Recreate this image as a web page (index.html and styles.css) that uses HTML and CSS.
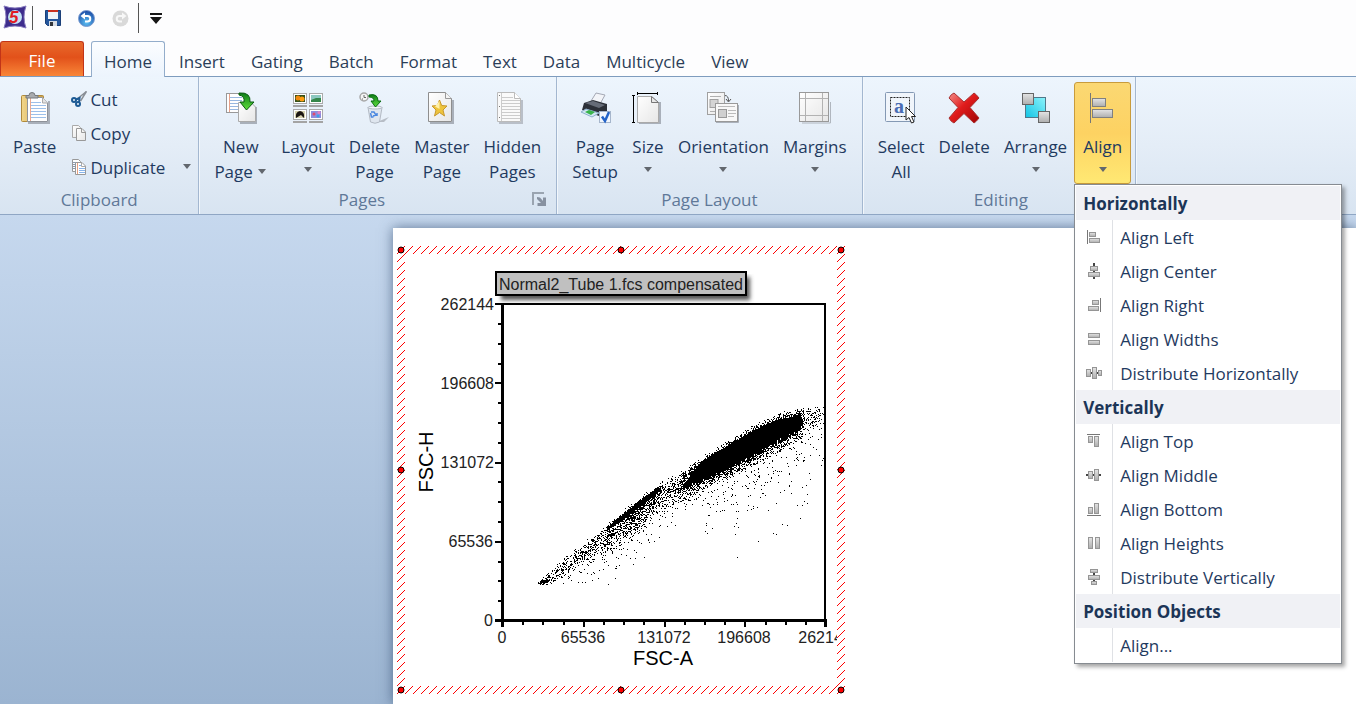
FILE: index.html
```html
<!DOCTYPE html>
<html lang="en">
<head>
<meta charset="utf-8">
<title>Layout editor</title>
<link rel="stylesheet" href="styles.css">
</head>
<body>
<svg class="defs" aria-hidden="true">
  <defs>
    <linearGradient id="paper" x1="0" y1="0" x2="1" y2="1"><stop offset="0" stop-color="#fff"/><stop offset="1" stop-color="#e6e6e6"/></linearGradient>
    <linearGradient id="grey" x1="0" y1="0" x2="0" y2="1"><stop offset="0" stop-color="#e4e4e4"/><stop offset="1" stop-color="#aeaeae"/></linearGradient>
    <linearGradient id="green" x1="0" y1="0" x2="0" y2="1"><stop offset="0" stop-color="#0e7c18"/><stop offset="1" stop-color="#5fe03c"/></linearGradient>
    <linearGradient id="red" x1="0" y1="0" x2="1" y2="1"><stop offset="0" stop-color="#f48c88"/><stop offset=".45" stop-color="#e01c1c"/><stop offset="1" stop-color="#a00404"/></linearGradient>
    <linearGradient id="cyan" x1="1" y1="0" x2="0" y2="1"><stop offset="0" stop-color="#8df3fb"/><stop offset="1" stop-color="#12c4e4"/></linearGradient>
    <linearGradient id="gold" x1="0" y1="0" x2="1" y2="0"><stop offset="0" stop-color="#f2d68a"/><stop offset="1" stop-color="#cda24a"/></linearGradient>
    <radialGradient id="blue" cx=".5" cy=".75" r=".7"><stop offset="0" stop-color="#5cc0f4"/><stop offset="1" stop-color="#1c4ea8"/></radialGradient>
    <symbol id="tri" viewBox="0 0 10 6"><path d="M1 0H9L5 5Z" fill="#62676e"/></symbol>
  </defs>
</svg>

<header class="quick">
  <svg class="logo" width="24" height="24" viewBox="0 0 24 24" role="img" aria-label="Application">
    <path d="M1 1Q12 5 23 1Q19 12 23 23Q12 19 1 23Q5 12 1 1Z" fill="#3d2c8c" stroke="#8478bc"/>
    <circle cx="12" cy="12" r="7" fill="#c4e4f4"/>
    <text x="6" y="18" class="logo-text">5</text>
  </svg>
  <span class="bar"></span>
  <button class="qbtn" aria-label="Save">
    <svg width="16" height="16" viewBox="0 0 16 16"><path d="M.5.5h15v15h-13l-2-2z" fill="#24569c" stroke="#1b3f78"/><path d="M3 1h10v8H3z" fill="#eef3f8"/><path d="M3 0h10v2H3z" fill="#c83020"/><path d="M4 11h8v5H4z" fill="#d6dce4"/><path d="M5 12h3v4H5z" fill="#30343a"/></svg>
  </button>
  <button class="qbtn" aria-label="Undo">
    <svg width="17" height="17" viewBox="0 0 17 17"><circle cx="8.500" cy="8.500" r="8" fill="url(#blue)" stroke="#7c9cd0"/><path d="M5.500 6H9.500a2.700 2.700 0 0 1 0 5.500H7" fill="none" stroke="#fff" stroke-width="2"/><path d="M2.500 6 7 2.500v7z" fill="#fff"/></svg>
  </button>
  <button class="qbtn" aria-label="Redo" disabled>
    <svg width="17" height="17" viewBox="0 0 17 17"><circle cx="8.500" cy="8.500" r="8" fill="#d9d9d9"/><path d="M11.500 6H7.500a2.700 2.700 0 0 0 0 5.500H10" fill="none" stroke="#f8f8f8" stroke-width="2"/><path d="M14.500 6 10 2.500v7z" fill="#f8f8f8"/></svg>
  </button>
  <span class="bar tall"></span>
  <button class="qbtn more" aria-label="Customize toolbar">
    <svg width="12" height="11" viewBox="0 0 12 11"><path d="M0 0h12v2H0zM0 4h12L6 11z" fill="#161616"/></svg>
  </button>
</header>

<nav class="tabs">
  <a class="tab file" href="#file">File</a>
  <a class="tab active" href="#home">Home</a>
  <a class="tab" href="#insert">Insert</a>
  <a class="tab" href="#gating">Gating</a>
  <a class="tab" href="#batch">Batch</a>
  <a class="tab" href="#format">Format</a>
  <a class="tab" href="#text">Text</a>
  <a class="tab" href="#data">Data</a>
  <a class="tab" href="#multicycle">Multicycle</a>
  <a class="tab" href="#view">View</a>
</nav>

<section class="ribbon">
  <div class="group clipboard">
    <div class="tools">
      <button class="tool">
        <svg width="32" height="32" viewBox="0 0 32 32"><path d="M30 9v22H9" stroke="#a9b0ba" stroke-width="2" fill="none"/><rect x="2.500" y="3.500" width="22" height="26" rx="1" fill="url(#gold)" stroke="#b08a3c"/><path d="M8.500 5.500H23.500L28.500 11V29.500H8.500Z" fill="#fff" stroke="#8e9299"/><path d="M23.500 5.500V11H28.500" fill="#e4e4e4" stroke="#aaa"/><path d="M12 10.500h10M12 13.500h15M12 16.500h15M12 19.500h15M12 22.500h15M12 25.500h15" stroke="#9cc0ea"/><path d="M11.500 6v23" stroke="#eaa892"/><path d="M7 6V3.500h3Q10 .5 13 .5T16 3.500h3V6Z" fill="#a9abae" stroke="#75787c"/></svg>
        <span>Paste</span>
      </button>
      <div class="small-tools">
        <button class="small">
          <svg width="16" height="16" viewBox="0 0 16 16"><path d="M5.500 8.500 15.500.5 9.500 10" fill="none" stroke="#8a8f96" stroke-width="1.500"/><path d="M5 8.500 8.500 7 8 12" fill="none" stroke="#1c5a94" stroke-width="2"/><circle cx="3" cy="9" r="2" fill="none" stroke="#1c5a94" stroke-width="2"/><circle cx="7" cy="13" r="2" fill="none" stroke="#1c5a94" stroke-width="2"/></svg>
          <span>Cut</span>
        </button>
        <button class="small">
          <svg width="16" height="16" viewBox="0 0 16 16"><path d="M1.500.5H7.500L9.500 2.500V12.500H1.500Z" fill="url(#paper)" stroke="#aaa"/><path d="M5.500 3.500H11L14.500 7V15.500H5.500Z" fill="url(#paper)" stroke="#999"/><path d="M10.500 3.500V7.500H14.500" fill="none" stroke="#999"/></svg>
          <span>Copy</span>
        </button>
        <button class="small">
          <svg width="16" height="16" viewBox="0 0 16 16"><path d="M1.500.5H7.500L9.500 2.500V12.500H1.500Z" fill="#fff" stroke="#999"/><path d="M2 3.500h3M2 5.500h3M2 7.500h3M2 9.500h3" stroke="#8a9cb4"/><path d="M4.500 3.500H11L14.500 7V15.500H4.500Z" fill="#fff" stroke="#999"/><path d="M10.500 3.500V7.500H14.500" fill="none" stroke="#aaa"/><path d="M8 6.500h2M8 9.500h6M8 11.500h6M8 13.500h6" stroke="#88b4ea"/><path d="M6.500 4v11" stroke="#e8a080"/></svg>
          <span>Duplicate</span>
          <svg class="arrow end" width="10" height="6"><use href="#tri"/></svg>
        </button>
      </div>
    </div>
    <div class="caption"><span>Clipboard</span></div>
  </div>

  <div class="group">
    <div class="tools">
      <button class="tool">
        <svg width="32" height="32" viewBox="0 0 32 32"><rect x="1.500" y="1.500" width="18" height="19" fill="#fff" stroke="#999"/><path d="M5 5.500h12M5 8.500h12M5 11.500h12M5 14.500h12M5 17.500h12" stroke="#98b8e0"/><path d="M4.500 2v18" stroke="#e8a088"/><path d="M31 15v16H15" stroke="#a9b0ba" stroke-width="2" fill="none"/><path d="M13.500 10.500H26L30.500 15V29.500H13.500Z" fill="url(#paper)" stroke="#aaa"/><path d="M14 1Q26 0 25 10H29L21.500 18 15 10H19Q20 4 14 3Z" fill="url(#green)" stroke="#0a5c12"/></svg>
        <span>New<br>Page <svg class="arrow" width="10" height="6"><use href="#tri"/></svg></span>
      </button>
      <button class="tool">
        <svg width="32" height="32" viewBox="0 0 32 32"><g fill="#fff" stroke="#aaa"><rect x="1.500" y="1.500" width="13" height="10"/><rect x="17.500" y="1.500" width="13" height="10"/><rect x="1.500" y="17.500" width="13" height="10"/><rect x="17.500" y="17.500" width="13" height="10"/></g><path d="M1 14h14M17 14h14M1 30h14M17 30h14" stroke="#a4a4a4" stroke-width="2"/><path d="M3 3h10v7H3z" fill="#35521a"/><circle cx="6" cy="6" r="2.500" fill="#f08a10"/><circle cx="10" cy="7" r="2.500" fill="#ff9d10"/><path d="M19 3h10v7H19z" fill="#8cc8c0"/><path d="M19 8 24 6h5v4H19z" fill="#35864a"/><path d="M3 19h10v7H3z" fill="#d8d4b0"/><path d="M4 26Q3 20 8 19Q13 20 12 26L9 23Z" fill="#1c1612"/><path d="M19 19h10v7H19z" fill="#8f8cdc"/><circle cx="22" cy="22" r="1.500" fill="#e04a6c"/><circle cx="26" cy="24" r="1.500" fill="#3ca0e8"/><circle cx="27" cy="20.500" r="1.500" fill="#e880c0"/></svg>
        <span>Layout</span>
        <svg class="arrow" width="10" height="6"><use href="#tri"/></svg>
      </button>
      <button class="tool">
        <svg width="32" height="32" viewBox="0 0 32 32"><path d="M19 30 31 25 26 30Z" fill="#b7bdc6"/><circle cx="6" cy="5" r="4" fill="#f5f5f5" stroke="#a7a7a7" stroke-width="1.500"/><path d="M6 3v2.500h2M4 7h1" stroke="#666" fill="none"/><path d="M10 15.500H24L21.500 30Q17 32.500 12.500 30Z" fill="#dfe6ef" stroke="#b3bac4"/><ellipse cx="17" cy="15.500" rx="7" ry="1.500" fill="#f5f8fb" stroke="#b3bac4"/><path d="M13 20h3l2 3-3 1M12.500 21l1 4h2M19 21v3" fill="none" stroke="#4c88e0" stroke-width="1.500"/><path d="M11 3Q20 1 20 9H23L17.500 15 13 9H16Q16 5 11 5Z" fill="url(#green)" stroke="#0a6c12"/></svg>
        <span>Delete<br>Page</span>
      </button>
      <button class="tool">
        <svg width="32" height="32" viewBox="0 0 32 32"><path d="M27 8v23H4" stroke="#a9b0ba" stroke-width="2" fill="none"/><path d="M2.500.5H19.500L25.500 6.500V29.500H2.500Z" fill="url(#paper)" stroke="#8e8e8e"/><path d="M19.500.5V6.500H25.500" fill="#f4f4f4" stroke="#999"/><path d="M13.500 8 15.700 13.500 21 14 17 18 18.500 24 13.500 20.500 8.500 24 10 18 6 14 11.300 13.500Z" fill="#eec43c" stroke="#c8982c"/><path d="M13.500 9V17L9 14.500Z" fill="#fff0a8"/></svg>
        <span>Master<br>Page</span>
      </button>
      <button class="tool">
        <svg width="32" height="32" viewBox="0 0 32 32"><path d="M26 8v23H3" stroke="#b9bfc8" stroke-width="2" fill="none"/><path d="M1.500.5H18.500L24.500 6.500V29.500H1.500Z" fill="#fafafa" stroke="#bbb"/><path d="M6 5.500h11M6 8.500h18M6 11.500h18M6 14.500h18M6 17.500h18M6 20.500h18M6 23.500h18M6 26.500h18M5.500 1v28" stroke="#ccc"/><path d="M18.500.5V6.500H24.500" fill="#fff" stroke="#bbb"/><path d="M3 3h1v1H3zM3 14h1v1H3zM3 25h1v1H3z" fill="#777"/></svg>
        <span>Hidden<br>Pages</span>
      </button>
    </div>
    <div class="caption"><span>Pages</span>
      <button class="launcher" aria-label="Pages options"><svg width="14" height="14" viewBox="0 0 14 14"><path d="M1 13V1H12" fill="none" stroke="#9aa4b0" stroke-width="2"/><path d="M5 5 8 5.500 11 9V5.500H14V14H5.500V11H9L5 7Z" fill="#8791a0"/></svg></button>
    </div>
  </div>

  <div class="group">
    <div class="tools">
      <button class="tool">
        <svg width="32" height="32" viewBox="0 0 32 32"><path d="M12 9 17 1 26 3 21 12Z" fill="#f2f4f8" stroke="#a4a8b4"/><path d="M5 11 14 8 28 12V19L20 24 3 18Z" fill="#2c3038"/><path d="M6 11 14 9 26 13 20 16Z" fill="#666c78"/><path d="M2 20 7 17 20 21 13 25Z" fill="#d2e6f4" stroke="#8eb0cc"/><path d="M6 20 10 18 16 20 12 23Z" fill="#38b44a"/><rect x="20.500" y="19.500" width="11" height="11" fill="#f2f7fd" stroke="#a6b6cc"/><path d="M23 24.500 26 29 30 20" fill="none" stroke="#2464c8" stroke-width="2.500"/></svg>
        <span>Page<br>Setup</span>
      </button>
      <button class="tool">
        <svg width="32" height="32" viewBox="0 0 32 32"><path d="M28 10v21H7" stroke="#a9b0ba" stroke-width="2" fill="none"/><path d="M5.500 4.500H19.500L26.500 10.500V30.500H5.500Z" fill="url(#paper)" stroke="#aaa"/><path d="M19.500 4.500V10.500H26.500Z" fill="#e8e8e8" stroke="#777"/><path d="M5 1.500H26M5.500 0V3M25.500 0V3M1.500 3V31M0 3.500H3M0 30.500H3" stroke="#000"/></svg>
        <span>Size</span>
        <svg class="arrow" width="10" height="6"><use href="#tri"/></svg>
      </button>
      <button class="tool">
        <svg width="32" height="32" viewBox="0 0 32 32"><g fill="url(#paper)" stroke="#a0a0a0"><rect x=".5" y=".5" width="17" height="22"/><rect x="3" y="7.500" width="8" height="8" fill="#d4d4d4"/></g><path d="M3 4.500h11M3 19.500h5" stroke="#b0b0b0"/><path d="M9 30.500h22.500V13" stroke="#a9b0ba" fill="none"/><rect x="8.500" y="11.500" width="22" height="18" fill="#f8f8f8" stroke="#999"/><path d="M11 14.500h17M21 18.500h8M21 21.500h8M21 24.500h6" stroke="#bbb"/><rect x="11.500" y="17.500" width="8" height="8" fill="#d0d0d0" stroke="#999"/><path d="M18 3.500Q21.500 3.500 21.500 9M19 7 21.500 10 24 7" fill="none" stroke="#555"/></svg>
        <span>Orientation</span>
        <svg class="arrow" width="10" height="6"><use href="#tri"/></svg>
      </button>
      <button class="tool">
        <svg width="32" height="32" viewBox="0 0 32 32"><path d="M31.500 10V31H3" stroke="#b0b6be" fill="none"/><rect x=".5" y=".5" width="29" height="29" fill="url(#paper)" stroke="#999"/><path d="M6.500 1V29M23.500 1V29M1 6.500H29M1 23.500H29" stroke="#b2b2b2"/></svg>
        <span>Margins</span>
        <svg class="arrow" width="10" height="6"><use href="#tri"/></svg>
      </button>
    </div>
    <div class="caption"><span>Page Layout</span></div>
  </div>

  <div class="group editing">
    <div class="tools">
      <button class="tool">
        <svg width="32" height="32" viewBox="0 0 32 32"><rect x=".5" y=".5" width="29" height="29" rx="1" fill="#f0f5fb" stroke="#8499b4"/><rect x="5.500" y="5.500" width="19" height="19" fill="none" stroke="#222" stroke-dasharray="2 1"/><text x="9" y="21" class="glyph-a">a</text><path d="M21 15V28L24 25.500 26.500 31 29 30 26.500 24.500H30.500Z" fill="#fff" stroke="#222"/></svg>
        <span>Select<br>All</span>
      </button>
      <button class="tool">
        <svg width="32" height="32" viewBox="0 0 32 32"><path d="M6 1 16 10 26 1Q28 2 31 6L22 15.500 31 26Q28 30 26 31L16 21.500 6 31Q3 30 1 26L10 15.500 1 6Q3 2 6 1Z" fill="url(#red)" stroke="#a83030"/></svg>
        <span>Delete</span>
      </button>
      <button class="tool">
        <svg width="32" height="32" viewBox="0 0 32 32"><rect x="5.500" y="5.500" width="20" height="20" fill="url(#cyan)" stroke="#50788a"/><g fill="url(#grey)" stroke="#666"><rect x="2.500" y="1.500" width="11" height="11"/><rect x="18.500" y="19.500" width="11" height="11"/></g></svg>
        <span>Arrange</span>
        <svg class="arrow" width="10" height="6"><use href="#tri"/></svg>
      </button>
      <div class="drop">
        <button class="tool pressed" aria-expanded="true">
          <svg width="32" height="32" viewBox="0 0 32 32"><path d="M3.500 1V31" stroke="#777"/><g fill="url(#grey)" stroke="#808080"><rect x="5.500" y="6.500" width="13" height="8"/><rect x="5.500" y="17.500" width="20" height="8"/></g></svg>
          <span>Align</span>
          <svg class="arrow" width="10" height="6"><use href="#tri"/></svg>
        </button>
        <div class="menu" role="menu">
          <h2 class="menu-head">Horizontally</h2>
          <button class="item" role="menuitem"><svg width="16" height="16" viewBox="0 0 16 16"><path d="M1.500 1V15" stroke="#777"/><g fill="url(#grey)" stroke="#959595"><rect x="3.500" y="3.500" width="6" height="4"/><rect x="3.500" y="9.500" width="10" height="4"/></g></svg><span>Align Left</span></button>
          <button class="item" role="menuitem"><svg width="16" height="16" viewBox="0 0 16 16"><path d="M8 0V16" stroke="#444" stroke-width="2"/><g fill="url(#grey)" stroke="#959595"><rect x="4.500" y="3.500" width="7" height="4"/><rect x="2.500" y="9.500" width="11" height="4"/></g></svg><span>Align Center</span></button>
          <button class="item" role="menuitem"><svg width="16" height="16" viewBox="0 0 16 16"><path d="M14.500 1V15" stroke="#777"/><g fill="url(#grey)" stroke="#959595"><rect x="6.500" y="3.500" width="6" height="4"/><rect x="2.500" y="9.500" width="10" height="4"/></g></svg><span>Align Right</span></button>
          <button class="item" role="menuitem"><svg width="16" height="16" viewBox="0 0 16 16"><g fill="url(#grey)" stroke="#959595"><rect x="2.500" y="2.500" width="11" height="4"/><rect x="2.500" y="9.500" width="11" height="4"/></g></svg><span>Align Widths</span></button>
          <button class="item" role="menuitem"><svg width="16" height="16" viewBox="0 0 16 16"><path d="M0 8H16" stroke="#444" stroke-width="2"/><g fill="url(#grey)" stroke="#959595"><rect x=".5" y="4.500" width="4" height="7"/><rect x="6.500" y="2.500" width="4" height="11"/><rect x="12.500" y="5.500" width="3" height="5"/></g></svg><span>Distribute Horizontally</span></button>
          <h2 class="menu-head">Vertically</h2>
          <button class="item" role="menuitem"><svg width="16" height="16" viewBox="0 0 16 16"><path d="M1 1.500H14" stroke="#777"/><g fill="url(#grey)" stroke="#959595"><rect x="2.500" y="3.500" width="4" height="6"/><rect x="8.500" y="3.500" width="4" height="10"/></g></svg><span>Align Top</span></button>
          <button class="item" role="menuitem"><svg width="16" height="16" viewBox="0 0 16 16"><path d="M0 8H15" stroke="#444" stroke-width="2"/><g fill="url(#grey)" stroke="#959595"><rect x="2.500" y="4.500" width="4" height="7"/><rect x="8.500" y="2.500" width="4" height="11"/></g></svg><span>Align Middle</span></button>
          <button class="item" role="menuitem"><svg width="16" height="16" viewBox="0 0 16 16"><path d="M1 14.500H15" stroke="#777"/><g fill="url(#grey)" stroke="#959595"><rect x="2.500" y="6.500" width="4" height="6"/><rect x="8.500" y="2.500" width="4" height="10"/></g></svg><span>Align Bottom</span></button>
          <button class="item" role="menuitem"><svg width="16" height="16" viewBox="0 0 16 16"><g fill="url(#grey)" stroke="#959595"><rect x="2.500" y="2.500" width="4" height="11"/><rect x="9.500" y="2.500" width="4" height="11"/></g></svg><span>Align Heights</span></button>
          <button class="item" role="menuitem"><svg width="16" height="16" viewBox="0 0 16 16"><path d="M8 0V16" stroke="#444" stroke-width="2"/><g fill="url(#grey)" stroke="#959595"><rect x="4.500" y=".5" width="7" height="3"/><rect x="2.500" y="6.500" width="11" height="4"/><rect x="5.500" y="12.500" width="5" height="3"/></g></svg><span>Distribute Vertically</span></button>
          <h2 class="menu-head">Position Objects</h2>
          <button class="item" role="menuitem"><span class="no-icon"></span><span>Align...</span></button>
        </div>
      </div>
    </div>
    <div class="caption"><span>Editing</span></div>
  </div>
</section>

<main class="workspace">
  <div class="page">
    <svg class="plot" width="450" height="450" viewBox="396 245 450 450" role="img" aria-label="Scatter plot of FSC-H against FSC-A">
      <defs>
        <pattern id="hatch" width="8" height="8" patternUnits="userSpaceOnUse" patternTransform="translate(397 246)"><path d="M0 8 8 0" stroke="#f00"/></pattern>
        <clipPath id="inside"><rect x="405" y="254" width="432" height="432"/></clipPath>
        <filter id="soft"><feGaussianBlur stdDeviation="2"/></filter>
      </defs>
      <path d="M397 246H845V694H397ZM405 254V686H837V254Z" fill="url(#hatch)" fill-rule="evenodd"/>
      <g clip-path="url(#inside)">
        <rect x="501" y="277" width="249" height="23" fill="#555" filter="url(#soft)"/>
        <rect x="496" y="272" width="250" height="23" fill="#c0c0c0" stroke="#000" stroke-width="2"/>
        <text x="499" y="290" class="num">Normal2_Tube 1.fcs compensated</text>
        <path id="ticks" class="crisp"/>
        <path id="dots" class="crisp"/>
        <path d="M495 304H826M825 303V627" stroke="#000" stroke-width="2"/>
        <path d="M502.500 303V627M495 620.500H827" stroke="#000" stroke-width="3"/>
        <g class="num end-text"><text x="494" y="310">262144</text><text x="494" y="389">196608</text><text x="494" y="468">131072</text><text x="493" y="547">65536</text><text x="493" y="626">0</text></g>
        <g class="num mid-text"><text x="502" y="643">0</text><text x="583" y="643">65536</text><text x="664" y="643">131072</text><text x="744" y="643">196608</text><text x="825" y="643">262144</text></g>
        <text x="663" y="665" class="axis mid-text">FSC-A</text>
        <text x="0" y="0" transform="translate(433 462) rotate(-90)" class="axis mid-text">FSC-H</text>
      </g>
      <g fill="#f00" stroke="#000"><circle cx="401" cy="250" r="3"/><circle cx="621" cy="250" r="3"/><circle cx="841" cy="250" r="3"/><circle cx="401" cy="470" r="3"/><circle cx="841" cy="470" r="3"/><circle cx="401" cy="690" r="3"/><circle cx="621" cy="690" r="3"/><circle cx="841" cy="690" r="3"/></g>
    </svg>
  </div>
</main>
<script src="plot.js"></script>
</body>
</html>
```
FILE: styles.css
```css
* { box-sizing: border-box; }
body {
  margin: 0;
  height: 100vh;
  overflow: hidden;
  display: flex;
  flex-direction: column;
  background: #fdfdfe;
  color: #1f3a60;
  font: 17px/25px "Open Sans", "Noto Sans", sans-serif;
}
button { font: inherit; color: inherit; background: none; border: 0; padding: 0; margin: 0; }
svg { display: block; flex: none; }
.defs { position: absolute; width: 0; height: 0; }

.quick { display: flex; align-items: center; height: 36px; padding: 0 3px; flex: none; }
.logo { margin-bottom: 3px; }
.logo-text { font: italic bold 17px "Liberation Sans", Arial, sans-serif; fill: #e01c24; }
.bar { width: 1px; height: 24px; margin: 0 12px 0 5px; background: #555; }
.bar.tall { height: 30px; margin: 0 11px 0 0; }
.qbtn { margin-right: 17px; }
.qbtn:disabled { margin-right: 9px; }
.qbtn.more { margin: 0; }

.tabs { display: flex; height: 41px; padding-top: 5px; flex: none; border-bottom: 1px solid #7e9cbe; }
.tab { display: flex; align-items: center; height: 35px; padding: 5px 13px 0; color: #2b3e58; text-decoration: none; }
.tab.file { width: 84px; padding: 2px 0 0; justify-content: center; margin-right: 7px; color: #fff; border: 1px solid #c23418; border-bottom: 0; border-radius: 3px 3px 0 0; background: linear-gradient(#e86a2c, #e2511a 45%, #f98638); }
.tab.active { height: 36px; margin-right: 1px; padding: 3px 12px 0; border: 1px solid #93adcb; border-bottom: 0; border-radius: 3px 3px 0 0; background: linear-gradient(#fbfdff, #ecf4fd); }

.ribbon { position: relative; z-index: 2; display: flex; flex: none; height: 138px; border-bottom: 1px solid #8fa6c4; background: linear-gradient(#edf5fd, #e4edf7 50%, #d8e4f1); }
.group { display: flex; flex-direction: column; padding: 5px 8px 0; border-right: 1px solid #a3b7d0; box-shadow: 1px 0 #f2f7fc; }
.group.clipboard { padding: 5px 6px 0; }
.group.editing { padding-right: 4px; }
.tools { display: flex; }
.tool { display: flex; flex-direction: column; align-items: center; height: 102px; padding: 10px 7px 0; text-align: center; }
.tool > span { margin-top: 10px; white-space: nowrap; }
.tool > .arrow { margin-top: 8px; }
.tool span .arrow { display: inline-block; vertical-align: 3px; }
.tool.pressed { border: 1px solid #c89b3c; border-radius: 3px; padding: 9px 8px 0; background: linear-gradient(#fbd873, #fdd262 50%, #ffe873); }
.small-tools { display: flex; flex-direction: column; padding-left: 8px; }
.small { display: flex; align-items: center; gap: 3px; height: 34px; width: 121px; }
.small .end { margin-left: auto; }
.caption { display: flex; align-items: center; height: 32px; color: #5f7898; }
.caption span { flex: 1; text-align: center; }
.launcher { padding: 0 2px 0 16px; }
.glyph-a { font: bold 20px "Liberation Serif", serif; fill: #4a6cb4; }

.drop { position: relative; }
.menu { position: absolute; top: 100%; left: 0; width: 268px; padding: 1px; border: 1px solid #868b91; background: #fff; box-shadow: 3px 3px 4px rgba(0, 0, 0, .35); }
.menu-head { margin: 0; padding: 2px 7px 0; font-size: 17px; font-weight: 700; line-height: 32px; background: #f0f1f5; color: #1c3557; }
.item { display: flex; align-items: center; width: 100%; height: 34px; padding-left: 10px; text-align: left; }
.item span:last-child { flex: 1; margin-left: 10px; padding: 2px 0 0 7px; border-left: 1px solid #dfe1e5; line-height: 32px; }
.no-icon { width: 16px; }

.workspace { flex: 1; min-height: 0; padding: 13px 0 0 393px; background: linear-gradient(#c6d8ee, #9bb4d1); }
.page { height: 100%; padding: 17px 0 0 3px; background: #fff; box-shadow: 0 0 12px rgba(50, 75, 110, .7); }
.crisp { shape-rendering: crispEdges; stroke: #000; fill: none; }
.num { font: 16px "Liberation Sans", Arial, sans-serif; fill: #222; }
.axis { font: 20px "Liberation Sans", Arial, sans-serif; fill: #000; }
.end-text { text-anchor: end; }
.mid-text { text-anchor: middle; }
```
FILE: plot.js
```js
// Minor and major ticks on both axes.
let ticks = "";
for (let i = 0; i <= 16; i++) {
  const major = i % 4 === 0;
  const y = Math.round(620 - i * 19.8) + 0.5;
  const x = Math.round(502 + i * 20.2) + 0.5;
  ticks += `M${major ? 495 : 498} ${y}H502M${x} 621V${major ? 627 : 625}`;
}
const tickPath = document.getElementById("ticks");
tickPath.setAttribute("d", ticks);
tickPath.setAttribute("stroke-width", "2");

// Event density profile: x, upper edge, solid core top, core bottom, lower edge.
const profile = [
  [538, 582, 583, 583, 584], [541, 580, 580, 583, 584], [547, 576, 580, 582, 584],
  [552, 570, 577, 577, 583], [567, 558, 565, 565, 574], [593, 537, 545, 545, 560],
  [605, 528, 529, 529, 555], [608, 525, 526, 529, 553], [620, 515, 516, 521, 546],
  [640, 499, 500, 506, 532], [655, 488, 489, 495, 514], [662, 484, 487, 487, 511],
  [681, 474, 487, 487, 502], [685, 471, 482, 488, 501], [700, 460, 462, 481, 492],
  [717, 449, 451, 473, 483], [733, 439, 442, 466, 476], [750, 429, 432, 457, 467],
  [767, 420, 423, 447, 458], [783, 414, 418, 438, 448], [800, 410, 415, 428, 438],
  [804, 409, 422, 422, 432], [824, 408, 414, 414, 425]
];
let seed = 20117;
const random = () => {
  seed = (seed * 1664525 + 1013904223) >>> 0;
  return seed / 4294967296;
};
let dots = "";
for (let x = 538; x < 824; x++) {
  let k = 0;
  while (x > profile[k + 1][0]) k++;
  const a = profile[k], b = profile[k + 1];
  const t = (x - a[0]) / (b[0] - a[0]);
  const [, edge, top, bottom, low] = a.map((v, i) => v + (b[i] - v) * t);
  const solid = bottom - top > 1;
  const tail = x > 804 ? 0.6 : 1;
  const ragged = x > 660 ? (random() - 0.5) * 4 : 0;
  for (let y = 400; y < 585; y++) {
    let p = 0;
    if (solid && y >= top && y <= bottom + ragged) p = 1;
    else if (y < top && y >= edge - 3) p = y < edge + ragged ? 0.08 : solid ? 0.6 : 0.36 * tail;
    else if (y >= top && y <= low) p = (solid ? 0.65 : 0.48 * tail) * (1 - 0.75 * (y - bottom) / (low - bottom));
    else if (y > low && x > 560) {
      const reach = x > 700 ? 24 : 10;
      p = 0.08 * Math.exp(-(y - low) / reach);
      if (y > low + (x > 730 ? 95 : 45)) p = 0;
    }
    if (random() < p) dots += `M${x} ${y + 0.5}h1`;
  }
}
document.getElementById("dots").setAttribute("d", dots);
```
